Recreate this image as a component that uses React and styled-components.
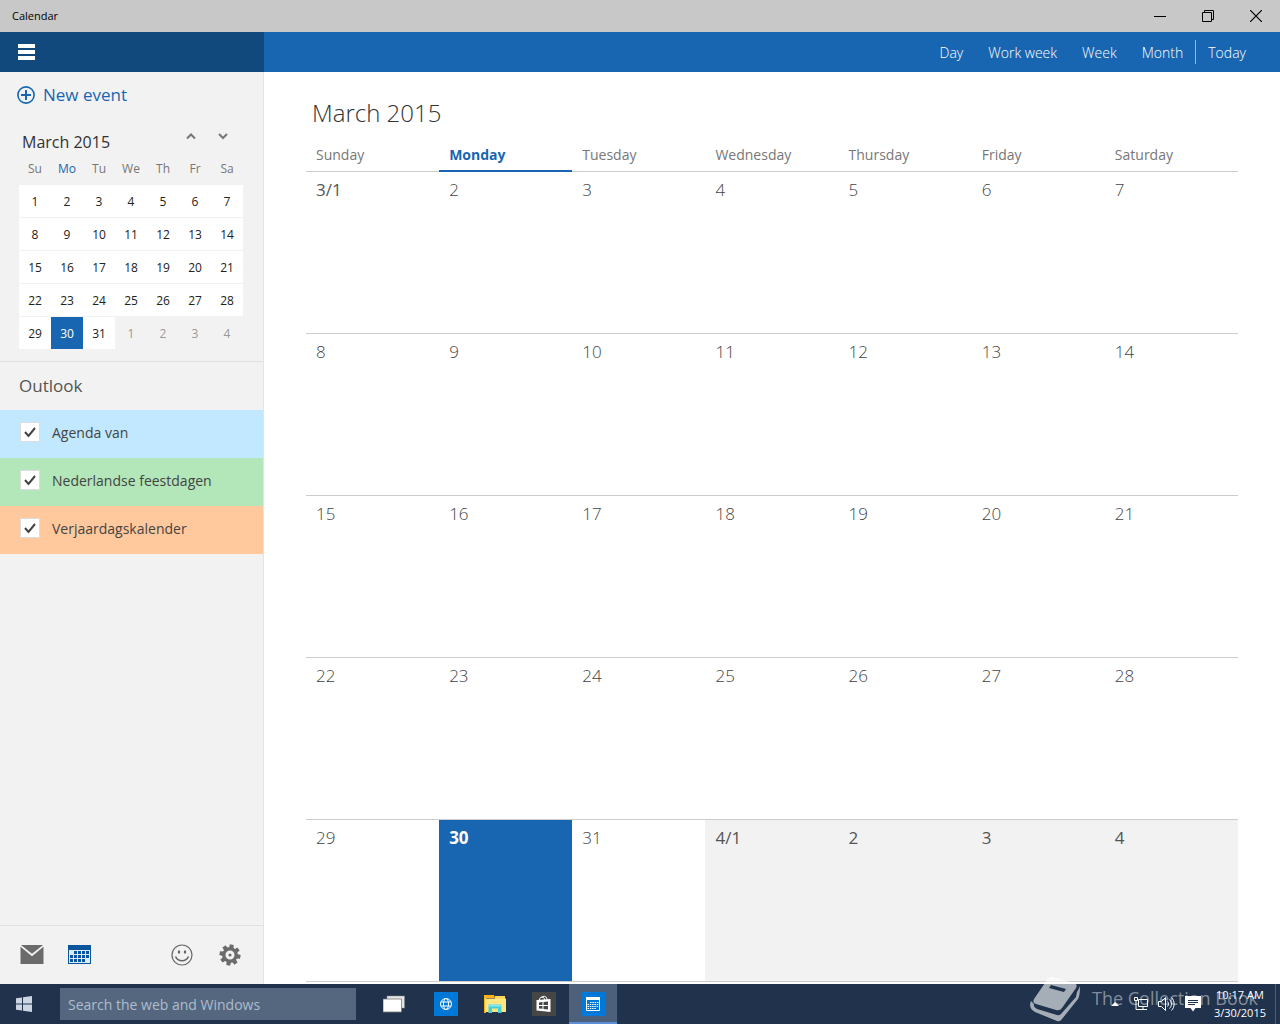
import React, { useState } from 'react';
import styled, { createGlobalStyle, css } from 'styled-components';

const blue = '#1866b1';

const MINI_DAYS = ['Su', 'Mo', 'Tu', 'We', 'Th', 'Fr', 'Sa'];
const DAYS = ['Sunday', 'Monday', 'Tuesday', 'Wednesday', 'Thursday', 'Friday', 'Saturday'];
const TODAY = 29;

// five weeks, index 0 is March 1st
const weeks = [0, 1, 2, 3, 4].map(w =>
    DAYS.map((name, d) => {
        const index = w * 7 + d;
        const next = index > 30;
        const day = next ? index - 30 : index + 1;
        return { index, day, next, today: index === TODAY, first: day === 1, label: day === 1 ? `${next ? 4 : 3}/1` : `${day}` };
    })
);

const CALENDARS = [
    { id: 'agenda', name: 'Agenda van', color: '#c1e8ff' },
    { id: 'feestdagen', name: 'Nederlandse feestdagen', color: '#b3e6b9' },
    { id: 'verjaardag', name: 'Verjaardagskalender', color: '#ffc99d' },
];

const App = () => {
    const [checked, setChecked] = useState({ agenda: true, feestdagen: true, verjaardag: true });

    const toggle = id => {
        setChecked({ ...checked, [id]: !checked[id] });
    };

    return (
        <Page>
            <GlobalStyle />
            <TitleBar>
                <AppName>Calendar</AppName>
                <WindowButton aria-label="Minimize">
                    <svg width="12" height="12" viewBox="0 0 12 12"><path d="M0 6.5h12" stroke="#000" /></svg>
                </WindowButton>
                <WindowButton aria-label="Restore">
                    <svg width="12" height="12" viewBox="0 0 12 12" fill="none" stroke="#000"><path d="M.5 2.5h9v9h-9zM2.5 2.5v-2h9v9h-2" /></svg>
                </WindowButton>
                <WindowButton aria-label="Close">
                    <svg width="12" height="12" viewBox="0 0 12 12" stroke="#000" strokeWidth="1.2"><path d="M0 0l12 12M12 0L0 12" /></svg>
                </WindowButton>
            </TitleBar>

            <CommandBar>
                <MenuArea>
                    <IconButton aria-label="Menu">
                        <svg width="17" height="16" viewBox="0 0 17 16" fill="#fff"><path d="M0 0h17v4H0zM0 6h17v4H0zM0 12h17v4H0z" /></svg>
                    </IconButton>
                </MenuArea>
                <Views>
                    <ViewButton>Day</ViewButton>
                    <ViewButton>Work week</ViewButton>
                    <ViewButton>Week</ViewButton>
                    <ViewButton>Month</ViewButton>
                    <TodayButton>Today</TodayButton>
                </Views>
            </CommandBar>

            <Body>
                <Sidebar>
                    <NewEvent>
                        <svg width="18" height="18" viewBox="0 0 18 18" fill="none" stroke={blue}>
                            <circle cx="9" cy="9" r="8.1" strokeWidth="1.6" />
                            <path d="M9 4v10M4 9h10" strokeWidth="2" />
                        </svg>
                        New event
                    </NewEvent>

                    <MiniHead>
                        <MiniTitle>March 2015</MiniTitle>
                        <Arrow aria-label="Previous month">
                            <svg width="10" height="8" viewBox="0 0 10 8" fill="none" stroke="#777" strokeWidth="2"><path d="M1 6.5l4-4 4 4" /></svg>
                        </Arrow>
                        <Arrow aria-label="Next month">
                            <svg width="10" height="8" viewBox="0 0 10 8" fill="none" stroke="#777" strokeWidth="2"><path d="M1 2l4 4 4-4" /></svg>
                        </Arrow>
                    </MiniHead>
                    <MiniTable>
                        <thead>
                            <tr>{MINI_DAYS.map((d, i) => <MiniTh key={d} $active={i === 1}>{d}</MiniTh>)}</tr>
                        </thead>
                        <tbody>
                            {weeks.map(week => (
                                <tr key={week[0].index}>
                                    {week.map(d => (
                                        <MiniTd key={d.index}>
                                            <MiniDay $today={d.today} $next={d.next}>{d.day}</MiniDay>
                                        </MiniTd>
                                    ))}
                                </tr>
                            ))}
                        </tbody>
                    </MiniTable>

                    <Account>Outlook</Account>
                    {CALENDARS.map(c => (
                        <CalendarRow key={c.id} $color={c.color}>
                            <Check type="checkbox" checked={checked[c.id]} onChange={() => toggle(c.id)} />
                            {c.name}
                        </CalendarRow>
                    ))}

                    <SideFooter>
                        <IconButton aria-label="Mail"><MailIcon /></IconButton>
                        <IconButton aria-label="Calendar"><CalendarIcon /></IconButton>
                        <Spacer />
                        <IconButton aria-label="Feedback"><SmileIcon /></IconButton>
                        <IconButton aria-label="Settings"><GearIcon /></IconButton>
                    </SideFooter>
                </Sidebar>

                <Main>
                    <MonthTitle>March 2015</MonthTitle>
                    <MonthTable>
                        <thead>
                            <tr>{DAYS.map((d, i) => <MonthTh key={d} $active={i === 1}>{d}</MonthTh>)}</tr>
                        </thead>
                        <tbody>
                            {weeks.map(week => (
                                <tr key={week[0].index}>
                                    {week.map(d => (
                                        <MonthTd key={d.index} $today={d.today} $next={d.next} $first={d.first}>{d.label}</MonthTd>
                                    ))}
                                </tr>
                            ))}
                        </tbody>
                    </MonthTable>
                </Main>
            </Body>

            <Taskbar>
                <Watermark>
                    <BookIcon />
                    The Collection Book
                </Watermark>
                <StartButton aria-label="Start">
                    <svg width="16" height="16" viewBox="0 0 16 16" fill="#ccd6e2"><path d="M0 2.3l6-.9v6.1H0zM7 1.2L16 0v7.5H7zM0 8.5h6v6.1l-6-.9zM7 8.5h9V16l-9-1.2z" /></svg>
                </StartButton>
                <Search type="text" aria-label="Search" placeholder="Search the web and Windows" />
                <Tasks>
                    <TaskButton aria-label="Task view"><TaskViewIcon /></TaskButton>
                    <TaskButton aria-label="Browser"><BrowserIcon /></TaskButton>
                    <TaskButton aria-label="File Explorer"><FolderIcon /></TaskButton>
                    <TaskButton aria-label="Store"><StoreIcon /></TaskButton>
                    <TaskButton aria-label="Calendar" $active><TaskCalendarIcon /></TaskButton>
                </Tasks>
                <Tray>
                    <TrayButton aria-label="Show hidden icons">
                        <svg width="8" height="4" viewBox="0 0 8 4"><path d="M0 4l4-4 4 4z" fill="#fff" /></svg>
                    </TrayButton>
                    <TrayButton aria-label="Network"><NetworkIcon /></TrayButton>
                    <TrayButton aria-label="Volume"><VolumeIcon /></TrayButton>
                    <TrayButton aria-label="Notifications"><NoteIcon /></TrayButton>
                    <Clock>
                        <span>10:17 AM</span>
                        <span>3/30/2015</span>
                    </Clock>
                    <ShowDesktop aria-label="Show desktop" />
                </Tray>
            </Taskbar>
        </Page>
    );
};

const MailIcon = () => (
    <svg width="24" height="20" viewBox="0 0 24 20" fill="#6b6b6b">
        <path d="M1 0h22L12 8.8z" />
        <path d="M.5 1.8L12 11.2l11.5-9.4V19H.5z" />
    </svg>
);

const CalendarIcon = () => (
    <svg width="24" height="20" viewBox="0 0 24 20">
        <path d="M0 0h23v19H0z" fill="#0b559c" />
        <path d="M1 5h21v13H1z" fill="#d9ecfb" />
        <path d="M6 6h3v3H6zM10 6h3v3h-3zM14 6h3v3h-3zM18 6h3v3h-3zM2 10h3v3H2zM6 10h3v3H6zM10 10h3v3h-3zM14 10h3v3h-3zM18 10h3v3h-3zM2 14h3v3H2zM6 14h3v3H6zM10 14h3v3h-3zM14 14h3v3h-3z" fill="#0b559c" />
    </svg>
);

const SmileIcon = () => (
    <svg width="22" height="22" viewBox="0 0 22 22" fill="none" stroke="#666">
        <circle cx="11" cy="11" r="10" strokeWidth="1.2" />
        <ellipse cx="8" cy="8" rx="1.2" ry="1.7" fill="#666" stroke="none" />
        <ellipse cx="14" cy="8" rx="1.2" ry="1.7" fill="#666" stroke="none" />
        <path d="M4.5 12.5c2.5 5.6 10.5 5.6 13 0" strokeWidth="1.6" />
    </svg>
);

const GearIcon = () => (
    <svg width="22" height="22" viewBox="-11 -11 22 22" fill="#6b6b6b">
        {[0, 45, 90, 135, 180, 225, 270, 315].map(a => (
            <path key={a} d="M-2.2 -7L-1.9 -10.5h3.8L2.2 -7z" transform={`rotate(${a + 10})`} />
        ))}
        <circle r="6.2" fill="none" stroke="#6b6b6b" strokeWidth="3.4" />
        <circle r="1.6" />
    </svg>
);

// blank strip on the right keeps the two windows left of the middle
const TaskViewIcon = () => (
    <svg width="28" height="18" viewBox="0 0 28 18">
        <path d="M4 1h17.5v12H4z" fill="#e4e4e4" stroke="#888" strokeWidth=".5" />
        <path d="M0 4h18.5v13H0z" fill="#fff" stroke="#777" strokeWidth=".8" />
    </svg>
);

const BrowserIcon = () => (
    <svg width="24" height="24" viewBox="0 0 24 24" fill="none" stroke="#fff">
        <path d="M0 0h24v24H0z" fill="#0078d7" stroke="none" />
        <circle cx="12" cy="12" r="5.5" />
        <ellipse cx="12" cy="12" rx="2.5" ry="5.5" />
        <path d="M7 10h10M7 14h10" />
    </svg>
);

const FolderIcon = () => (
    <svg width="22" height="20" viewBox="0 0 22 20">
        <path d="M0 1h10l1 3h-9v15H0z" fill="#ffb012" />
        <path d="M11 2h10v3H11z" fill="#ffd65c" />
        <path d="M1 4.5h21V18H1z" fill="#ffe680" />
        <path d="M4.5 19v-8.5h13V19H14v-4.500H8V19z" fill="#46d0dc" />
        <path d="M4.5 12.5v-2h13v2z" fill="#8be9ea" />
    </svg>
);

const StoreIcon = () => (
    <svg width="24" height="24" viewBox="0 0 24 24">
        <path d="M0 0h24v24H0z" fill="#464646" />
        <path d="M7.5 8c0-4 5-4 5 0M9.5 6c1-3 6-2 5.5 2" fill="none" stroke="#fff" />
        <path d="M4.5 8l14-1v13l-14-1.5z" fill="#fff" />
        <path d="M7 10.5l3.5-.4v3H7zM11.5 10L16 9.5v3.6h-4.500zM7 14h3.5v2.8L7 16.400zM11.5 14H16v3.4l-4.5-.5z" fill="#464646" />
    </svg>
);

const TaskCalendarIcon = () => (
    <svg width="24" height="24" viewBox="0 0 24 24">
        <path d="M0 0h24v24H0z" fill="#0078d7" />
        <path d="M5.5 5.5h13v13h-13z" fill="none" stroke="#fff" />
        <path d="M5 5h14v3H5z" fill="#fff" />
        <path d="M9 10.5h9M6.5 12.5H18M6.5 14.5H18M6.5 16.5H15" stroke="#fff" strokeDasharray="1.5 .8" />
    </svg>
);

const NetworkIcon = () => (
    <svg width="16" height="16" viewBox="0 0 16 16" fill="none" stroke="#fff">
        <path d="M5.5 3.5h9v7h-9zM10 11v2.5M6 13.5h8M1.5 1.5h3v3h-3zM3 5v8.5h3" />
    </svg>
);

const VolumeIcon = () => (
    <svg width="17" height="14" viewBox="0 0 17 14" fill="none" stroke="#fff">
        <path d="M.5 4.5h3l4-4v13l-4-4h-3zM9.5 4.5c1.3 1.5 1.3 3.5 0 5M11.5 2.5c2.5 2.5 2.5 6.5 0 9M13.5.5c3.5 3.5 3.5 9.5 0 13" />
    </svg>
);

const NoteIcon = () => (
    <svg width="16" height="16" viewBox="0 0 16 16">
        <path d="M0 0h16v12h-5.500L8 15.5 5.5 12H0z" fill="#fff" />
        <path d="M3 4.5h10M3 6.5h10M3 8.5h7" stroke="#20324c" />
    </svg>
);

const BookIcon = () => (
    <svg width="50" height="48" viewBox="0 0 50 48" fill="#fff" fillOpacity=".6">
        <path d="M17 4Q19 0 23 1l21 6q4 1 2 5L32 32q-2 3-6 2L6 28q-4-1-2-5zM21 9l-2 3 15 4 2-3z" fillRule="evenodd" />
        <path d="M1 25q-3 7 4 11l22 9q3 1 5-2l16-20q2-3 2-13-1 3-3 6l-1 5-15 17q-2 2-4 1L7 33q-4-2-3-5z" />
    </svg>
);

const GlobalStyle = createGlobalStyle`
* {
    box-sizing: border-box;
}
body {
    margin: 0;
    font-family: "Open Sans", "Noto Sans", sans-serif;
    color: #333;
}
button, input {
    font-family: inherit;
}
button {
    padding: 0;
    border: 0;
    background: none;
    cursor: pointer;
}
svg {
    display: block;
    flex: none;
}
`;

const Page = styled.div`
    display: flex;
    flex-direction: column;
    min-height: 100vh;
    background: #fff;
`;

const TitleBar = styled.header`
    display: flex;
    height: 32px;
    background: #c8c8c8;
`;

const AppName = styled.div`
    flex: 1;
    padding-left: 12px;
    font-size: 11px;
    line-height: 32px;
    color: #000;
`;

const WindowButton = styled.button`
    display: flex;
    align-items: center;
    justify-content: center;
    width: 48px;
`;

const CommandBar = styled.nav`
    display: flex;
    height: 40px;
    background: ${blue};
`;

const MenuArea = styled.div`
    display: flex;
    width: 264px;
    padding-left: 2px;
    background: #11497c;
`;

const IconButton = styled.button`
    display: flex;
    align-items: center;
    justify-content: center;
    width: 48px;
`;

const Views = styled.div`
    display: flex;
    flex: 1;
    align-items: center;
    justify-content: flex-end;
    padding-right: 22px;
`;

const ViewButton = styled.button`
    height: 24px;
    padding: 0 12px 0 13px;
    font-size: 14px;
    font-weight: 300;
    line-height: 26px;
    color: #fff;
`;

const TodayButton = styled(ViewButton)`
    padding-left: 12px;
    border-left: 1px solid #8fbce6;
`;

const Body = styled.div`
    display: flex;
    flex: 1;
`;

const Sidebar = styled.aside`
    display: flex;
    flex-direction: column;
    width: 264px;
    flex: none;
    background: #f2f2f2;
    border-right: 1px solid #e4e4e4;
`;

const NewEvent = styled.button`
    display: flex;
    align-items: center;
    gap: 8px;
    height: 48px;
    padding: 0 0 3px 17px;
    font-size: 17px;
    color: ${blue};
`;

const MiniHead = styled.div`
    display: flex;
    height: 32px;
    padding: 0 24px 0 22px;
`;

const MiniTitle = styled.h2`
    flex: 1;
    margin: 0;
    padding-top: 8px;
    font-size: 16px;
    font-weight: 400;
    line-height: 28px;
`;

const Arrow = styled.button`
    display: flex;
    align-items: center;
    justify-content: center;
    width: 32px;
`;

const MiniTable = styled.table`
    width: 224px;
    margin: 0 19px 11px;
    table-layout: fixed;
    border-collapse: collapse;
`;

const MiniTh = styled.th`
    height: 33px;
    padding: 0;
    font-size: 12px;
    font-weight: 400;
    color: ${p => (p.$active ? blue : '#777')};
`;

const MiniTd = styled.td`
    height: 33px;
    padding: 0 0 1px;
`;

const MiniDay = styled.button`
    display: block;
    width: 100%;
    height: 32px;
    font-size: 12px;
    color: #222;
    background: #fff;

    ${p => p.$next && css`
        color: #999;
        background: none;
    `}

    ${p => p.$today && css`
        color: #fff;
        background: ${blue};
    `}
`;

const Account = styled.h2`
    margin: 0;
    padding-left: 19px;
    border-top: 1px solid #e0e0e0;
    font-size: 17px;
    font-weight: 400;
    line-height: 48px;
    color: #555;
`;

const CalendarRow = styled.label`
    display: flex;
    align-items: center;
    gap: 12px;
    height: 48px;
    padding: 0 0 4px 20px;
    font-size: 14px;
    color: #444;
    background: ${p => p.$color};
`;

const Check = styled.input`
    appearance: none;
    width: 20px;
    height: 20px;
    margin: 0;
    border: 1px solid #ddd;
    background: #fff;

    &:checked {
        background: #fff url("data:image/svg+xml,%3Csvg xmlns='http://www.w3.org/2000/svg' viewBox='0 0 18 18'%3E%3Cpath d='M4 9l3.5 4L14 5' fill='none' stroke='%23444' stroke-width='2'/%3E%3C/svg%3E");
    }
`;

const SideFooter = styled.div`
    display: flex;
    height: 59px;
    margin-top: auto;
    padding: 0 9px 1px 8px;
    border-top: 1px solid #e0e0e0;
`;

const Spacer = styled.div`
    flex: 1;
`;

const Main = styled.main`
    flex: 1;
    padding: 20px 42px 2px;
`;

const MonthTitle = styled.h1`
    margin: 0;
    padding-left: 6px;
    font-size: 24px;
    font-weight: 300;
    line-height: 42px;
`;

const MonthTable = styled.table`
    width: 100%;
    table-layout: fixed;
    border-collapse: separate;
    border-spacing: 0;
`;

const MonthTh = styled.th`
    height: 38px;
    padding: 4px 10px 0;
    border-bottom: 1px solid #ccc;
    font-size: 14px;
    font-weight: 400;
    text-align: left;
    color: #777;

    ${p => p.$active && css`
        border-bottom: 2px solid ${blue};
        font-weight: 700;
        color: ${blue};
    `}
`;

const MonthTd = styled.td`
    height: 162px;
    padding: 6px 10px;
    border-bottom: 1px solid #ccc;
    font-size: 17px;
    font-weight: 300;
    line-height: 24px;
    vertical-align: top;
    color: #444;
    background: ${p => (p.$next ? '#f2f2f2' : 'none')};

    ${p => (p.$next || p.$first) && css`
        font-weight: 400;
        color: #555;
    `}

    ${p => p.$today && css`
        font-weight: 700;
        color: #fff;
        background: ${blue} padding-box;
    `}
`;

const Taskbar = styled.footer`
    position: relative;
    display: flex;
    height: 40px;
    background: #20324c;
`;

const StartButton = styled.button`
    display: flex;
    align-items: center;
    justify-content: center;
    width: 48px;
    margin-right: 12px;
`;

const Search = styled.input`
    width: 296px;
    height: 32px;
    margin: 4px 0;
    padding: 0 8px;
    border: 0;
    font-size: 14px;
    color: #fff;
    background: #54677f;

    &::placeholder {
        color: #afbdcc;
    }
`;

const Tasks = styled.div`
    display: flex;
    flex: 1;
    gap: 1px;
    padding-left: 17px;
`;

const TaskButton = styled.button`
    display: flex;
    align-items: center;
    justify-content: center;
    width: 48px;

    ${p => p.$active && css`
        background: #4c607b;
        box-shadow: inset 0 -2px 0 #5c8fd6;
    `}
`;

// stays above the watermark
const Tray = styled.div`
    position: relative;
    z-index: 1;
    display: flex;
    align-items: center;
`;

const TrayButton = styled.button`
    display: flex;
    justify-content: center;
    width: 26px;
`;

const Clock = styled.div`
    display: flex;
    flex-direction: column;
    padding: 0 9px 0 8px;
    font-size: 11px;
    line-height: 18px;
    text-align: center;
    color: #fff;
`;

const ShowDesktop = styled.button`
    width: 5px;
    height: 40px;
    border-left: 1px solid #4c5c74;
`;

const Watermark = styled.div`
    position: absolute;
    right: 22px;
    bottom: 0;
    display: flex;
    gap: 12px;
    font-size: 18px;
    line-height: 44px;
    color: rgba(255, 255, 255, 0.45);
    pointer-events: none;
`;

export default App;
